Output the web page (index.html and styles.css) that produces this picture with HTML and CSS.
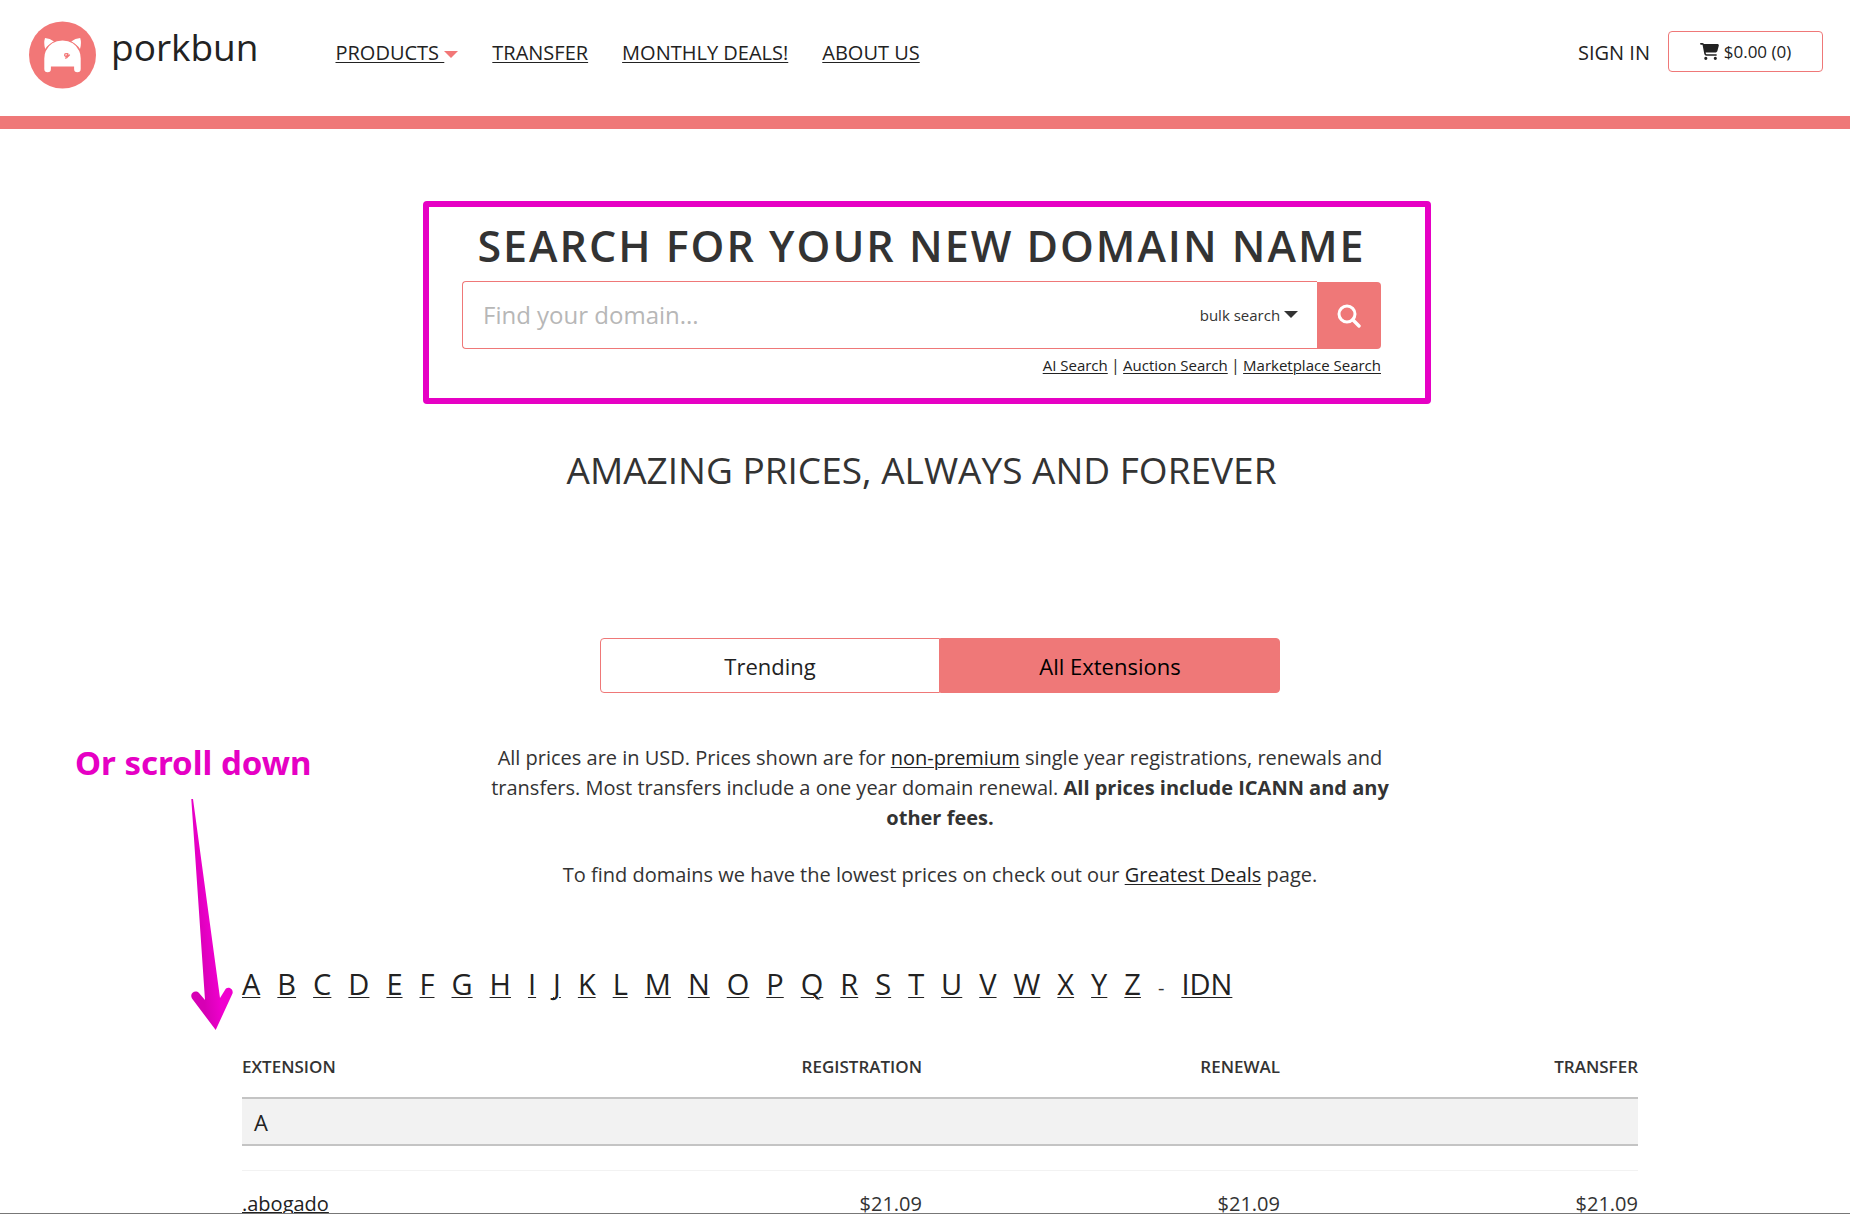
FILE: index.html
```html
<!DOCTYPE html>
<html lang="en">
<head>
<meta charset="utf-8">
<meta name="viewport" content="width=device-width, initial-scale=1">
<title>porkbun</title>
<link rel="stylesheet" href="styles.css">
</head>
<body>
<header class="site-header">
  <a class="brand" href="#">
    <svg class="brand-mark" viewBox="0 0 67 67" aria-hidden="true">
      <circle cx="33.500" cy="33.500" r="33.500" fill="#f27777"/>
      <path fill="#fff" d="M16 16.500q5 .3 9 3.500-6 3-8.800 7.500-1.800-6-.2-11zM51.200 16.500q-5 .3-9 3.500 6 3 8.800 7.500 1.800-6 .2-11z"/>
      <path fill="#fff" stroke="#f27777" stroke-width="1.400" paint-order="stroke" d="M15.300 37q0-4.500 1.500-7.500Q21.500 19 33.500 19t16.700 10.500q1.500 3 1.500 7.500v10.500a3.300 3.300 0 0 1-6.600 0V45H21.900v2.500a3.300 3.300 0 0 1-6.600 0z"/>
      <path fill="none" stroke="#f27777" stroke-width="1.200" stroke-linecap="round" d="M38.800 33.300c-.3-1.700-3.300-1.500-3.200.3.100 1.600 2.800 1.300 3-.3M38.800 32c.7 2.500-.2 4.300-2.300 4.700M40.500 33.500c-.8 1.600-2 1.800-3.600 1.500"/>
    </svg>
    <span class="brand-name">porkbun</span>
  </a>
  <nav class="main-nav">
    <a class="has-menu" href="#"><span class="menu-label">PRODUCTS </span><span class="caret"></span></a>
    <a href="#">TRANSFER</a>
    <a href="#">MONTHLY DEALS!</a>
    <a href="#">ABOUT US</a>
  </nav>
  <div class="account">
    <a class="sign-in" href="#">SIGN IN</a>
    <button class="cart" type="button">
      <svg class="cart-icon" viewBox="0 0 576 512" aria-hidden="true"><path fill="currentColor" d="M0 24C0 10.700 10.700 0 24 0h45.500c22 0 41.500 12.800 50.600 32h411c26.300 0 45.500 25 38.600 50.400l-41 152.300c-8.500 31.400-37 53.300-69.500 53.300H170.700l5.400 28.500c2.200 11.300 12.100 19.500 23.600 19.500H488c13.300 0 24 10.700 24 24s-10.700 24-24 24H199.700c-34.600 0-64.300-24.600-70.700-58.500L77.400 54.500c-.7-3.800-4-6.500-7.900-6.500H24C10.700 48 0 37.300 0 24zm128 440a48 48 0 1 1 96 0 48 48 0 1 1-96 0zm336-48a48 48 0 1 1 0 96 48 48 0 1 1 0-96z"/></svg>
      $0.00 (0)
    </button>
  </div>
</header>
<main>
  <section class="search">
    <h1>SEARCH FOR YOUR NEW DOMAIN NAME</h1>
    <form class="search-form">
      <div class="search-field">
        <input type="text" placeholder="Find your domain..." aria-label="Find your domain">
        <button class="bulk" type="button">bulk search <span class="caret"></span></button>
      </div>
      <button class="search-submit" type="button" aria-label="Search">
        <svg viewBox="0 0 24 24" aria-hidden="true"><circle cx="10" cy="10" r="8" fill="none" stroke="#fff" stroke-width="3"/><path d="M15.800 15.800L22 22" stroke="#fff" stroke-width="3.400" stroke-linecap="round"/></svg>
      </button>
    </form>
    <p class="search-links"><a href="#">AI Search</a><span>|</span><a href="#">Auction Search</a><span>|</span><a href="#">Marketplace Search</a></p>
    <div class="highlight"></div>
  </section>
  <h2>AMAZING PRICES, ALWAYS AND FOREVER</h2>
  <section class="pricing">
    <div class="tabs">
      <button class="tab" type="button">Trending</button>
      <button class="tab active" type="button">All Extensions</button>
    </div>
    <div class="intro">
      <p>All prices are in USD. Prices shown are for <a href="#">non-premium</a> single year registrations, renewals and transfers. Most transfers include a one year domain renewal. <strong>All prices include ICANN and any other fees.</strong></p>
      <p>To find domains we have the lowest prices on check out our <a href="#">Greatest Deals</a> page.</p>
    </div>
    <nav class="letters">
      <a href="#">A</a><a href="#">B</a><a href="#">C</a><a href="#">D</a><a href="#">E</a><a href="#">F</a><a href="#">G</a><a href="#">H</a><a href="#">I</a><a href="#">J</a><a href="#">K</a><a href="#">L</a><a href="#">M</a><a href="#">N</a><a href="#">O</a><a href="#">P</a><a href="#">Q</a><a href="#">R</a><a href="#">S</a><a href="#">T</a><a href="#">U</a><a href="#">V</a><a href="#">W</a><a href="#">X</a><a href="#">Y</a><a href="#">Z</a><span>-</span><a href="#">IDN</a>
    </nav>
    <table class="prices">
      <thead>
        <tr><th class="name">EXTENSION</th><th>REGISTRATION</th><th>RENEWAL</th><th>TRANSFER</th></tr>
      </thead>
      <tbody>
        <tr class="group"><td colspan="4">A</td></tr>
        <tr class="spacer"><td colspan="4"></td></tr>
        <tr class="price"><td><a href="#">.abogado</a></td><td>$21.09</td><td>$21.09</td><td>$21.09</td></tr>
      </tbody>
    </table>
    <aside class="note">
      <p>Or scroll down</p>
      <svg class="note-arrow" viewBox="0 0 42 232" aria-hidden="true">
        <defs><linearGradient id="arrow-fill" gradientUnits="userSpaceOnUse" x1="13" y1="201" x2="30" y2="199"><stop offset="0" stop-color="#d600b4"/><stop offset="1" stop-color="#f000cf"/></linearGradient></defs>
        <path fill="url(#arrow-fill)" d="M.3 0H2l27 199 5-8c2-4.500 9-1.500 7.500 3.500L24.700 231 1 199.500c-3-5.500 3.500-9 7-5.500l6 7z"/>
      </svg>
    </aside>
  </section>
</main>
</body>
</html>
```
FILE: styles.css
```css
* {
  box-sizing: border-box;
}

body {
  --pink: #ef7878;
  --magenta: #e600c4;
  height: 100vh;
  margin: 0;
  overflow: hidden;
  border-bottom: 1px solid #777;
  background: #fff;
  color: #333;
  font: 20px/30px "Open Sans", "Noto Sans", sans-serif;
}

a {
  color: #222;
  text-decoration-thickness: 1px;
  text-underline-offset: 2px;
}

h1, h2, p {
  margin: 0;
}

button, input {
  font: inherit;
  color: inherit;
}

.caret {
  display: inline-block;
  border: 7px solid transparent;
  border-top-color: currentColor;
  border-bottom: 0;
}

/* Header */
.site-header {
  display: flex;
  align-items: flex-start;
  padding: 21px 27px 27px 29px;
  border-bottom: 13px solid var(--pink);
}

.brand {
  display: flex;
  gap: 15px;
  margin-right: 77px;
  text-decoration: none;
}

.brand-mark {
  width: 67px;
  height: 68px;
}

.brand-name {
  font-size: 37px;
  line-height: 52px;
}

.main-nav {
  display: flex;
  gap: 34px;
  padding-top: 17px;
}

.has-menu {
  text-decoration: none;
}

.has-menu .menu-label {
  text-decoration: underline;
  text-decoration-thickness: 1px;
  white-space: pre;
}

.has-menu .caret {
  color: #f27777;
  vertical-align: 2px;
}

.account {
  display: flex;
  gap: 18px;
  margin-left: auto;
  padding-top: 10px;
}

.sign-in {
  padding-top: 7px;
  text-decoration: none;
}

.cart {
  display: flex;
  align-items: center;
  justify-content: center;
  gap: 5px;
  width: 155px;
  height: 41px;
  padding: 0;
  border: 1px solid var(--pink);
  border-radius: 4px;
  background: #fff;
  color: #222;
  font-size: 17px;
}

.cart-icon {
  width: 19px;
  height: 17px;
}

/* Domain search */
.search {
  position: relative;
  max-width: 926px;
  margin: 0 auto;
  padding: 87px 7px 0 0;
}

h1 {
  margin-bottom: 5px;
  font-size: 43px;
  font-weight: 600;
  line-height: 60px;
  letter-spacing: 2px;
  text-align: center;
}

.search-form {
  display: flex;
  align-items: flex-end;
}

.search-field {
  display: flex;
  flex: 1;
  height: 68px;
  border: 1px solid var(--pink);
  border-right: 0;
  border-radius: 4px 0 0 4px;
}

.search-field input {
  flex: 1;
  min-width: 0;
  padding: 0 20px;
  border: 0;
  background: none;
  font-size: 24px;
}

.search-field input::placeholder {
  color: #b7b7b7;
}

.bulk {
  padding: 0 19px;
  border: 0;
  background: none;
  font-size: 15px;
}

.bulk .caret {
  vertical-align: 3px;
}

.search-submit {
  display: flex;
  align-items: center;
  justify-content: center;
  width: 64px;
  height: 67px;
  padding: 0;
  border: 0;
  border-radius: 0 4px 4px 0;
  background: var(--pink);
}

.search-submit svg {
  width: 24px;
  height: 24px;
}

.search-links {
  display: flex;
  justify-content: flex-end;
  gap: 3px;
  padding-top: 4px;
  font-size: 15px;
  line-height: 24px;
}

.search-links span {
  font-size: 17px;
}

.highlight {
  position: absolute;
  inset: 72px -43px -27px -39px;
  border: 6px solid var(--magenta);
  border-radius: 4px;
  pointer-events: none;
}

h2 {
  padding: 69px 7px 0 0;
  font-size: 37px;
  font-weight: 400;
  line-height: 48px;
  text-align: center;
}

/* Pricing */
.pricing {
  position: relative;
  padding: 144px 212px 0 242px;
}

.tabs {
  display: flex;
  max-width: 680px;
  height: 55px;
  margin: 0 auto;
}

.tab {
  flex: 1;
  border: 1px solid var(--pink);
  border-radius: 4px 0 0 4px;
  background: #fff;
  color: #222;
  font-size: 22px;
}

.tab.active {
  border-radius: 0 4px 4px 0;
  background: var(--pink);
  color: #000;
}

.intro {
  display: grid;
  gap: 27px;
  max-width: 900px;
  margin: 50px auto 0;
  text-align: center;
}

.letters {
  display: flex;
  align-items: baseline;
  gap: 17px;
  margin-top: 74px;
  font-size: 29px;
  line-height: 40px;
}

.letters span {
  font-size: 20px;
}

.prices {
  width: 100%;
  margin-top: 47px;
  border-collapse: collapse;
  table-layout: fixed;
}

.prices th {
  width: 358px;
  padding: 0 0 18px;
  font-size: 17px;
  font-weight: 600;
  line-height: 24px;
  text-align: right;
}

.prices .name {
  width: auto;
  text-align: left;
}

.prices td {
  padding: 0;
  text-align: right;
}

.prices td:first-child {
  text-align: left;
}

.prices .group td {
  height: 47px;
  padding: 1px 12px 0;
  border: solid #c4c4c4;
  border-width: 2px 0;
  background: #f2f2f2;
  color: #222;
  font-size: 22px;
}

.prices .spacer td {
  height: 25px;
  border-bottom: 1px solid #f2f2f2;
}

.prices .price td {
  padding-top: 18px;
}

.prices a {
  text-underline-offset: 1px;
}

/* Annotation */
.note {
  position: absolute;
  top: 249px;
  left: 75px;
  color: var(--magenta);
  font: 700 33px/40px "Noto Sans", "Open Sans", sans-serif;
}

.note-arrow {
  display: block;
  width: 42px;
  height: 232px;
  margin: 16px 0 0 116px;
}
```
